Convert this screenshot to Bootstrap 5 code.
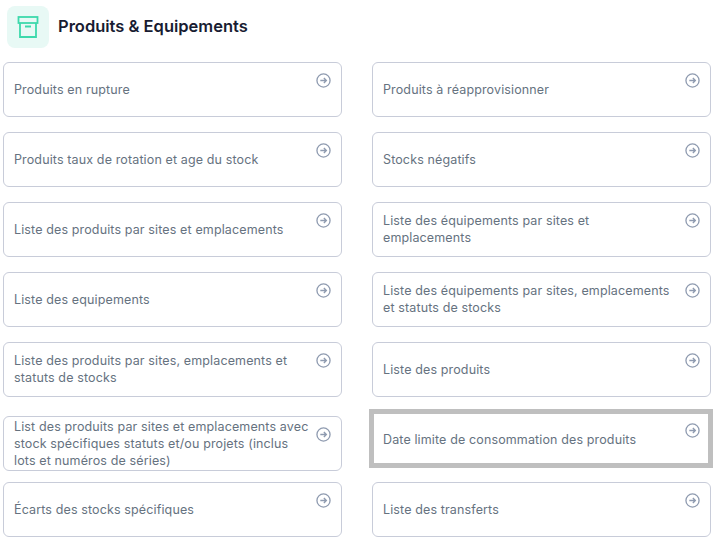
<!DOCTYPE html>
<html lang="fr">
<head>
<meta charset="utf-8">
<title>Produits &amp; Equipements</title>
<link rel="stylesheet" href="https://cdn.jsdelivr.net/npm/bootstrap@5.3.0/dist/css/bootstrap.min.css">
<style>
html,body{overflow:hidden;background:#fff}
body{font-family:"Inter","Open Sans",sans-serif}
.page-head{height:62px;padding:6px 0 0 7px;gap:9px}
.head-tile{width:42px;height:42px;background:#e8f9f5;border-radius:8px}
.head-title{font-size:16.5px;font-weight:600;color:#181c32;margin:0;line-height:20px;padding-top:10px}
.report-grid{grid-template-columns:339px 339px;column-gap:30px;row-gap:15px;padding-left:3px}
.report-card{height:55px;flex-direction:row;border:1px solid #c8ccd9;border-radius:6px;padding:0 10px;color:#66727f;font-size:12.5px;letter-spacing:.13px;line-height:17px;text-decoration:none;background:#fff;gap:6px}
.report-text{flex:1 1 auto;align-self:center;max-width:297px;padding-bottom:.5px}
.report-arrow{flex:none;margin:10px 0 0 auto;width:15px;height:15px}
.report-shift{margin-top:4px;margin-bottom:-4px}
.report-focus{border:5px solid #bfbfbf;border-radius:0;height:59px;margin:-3px -2px -1px -3px;padding:2px 8px 0 9px}
.report-focus .report-arrow{margin-top:7px}
</style>
</head>
<body>
<header class="page-head d-flex align-items-start">
  <div class="head-tile d-flex align-items-center justify-content-center">
    <svg width="22" height="22" viewBox="0 0 22 22" fill="none" stroke="#3dd9ac" stroke-width="1.8"><rect x="1.5" y="1" width="19" height="6"/><path d="M3 7v14h16V7M8 10.5h6"/></svg>
  </div>
  <h1 class="head-title">Produits &amp; Equipements</h1>
</header>
<main class="report-grid d-grid">
  <a href="#" class="report-card card"><span class="report-text">Produits en rupture</span><svg class="report-arrow" viewBox="0 0 16 16" fill="none" stroke="#8f9bb0" stroke-width="1.4"><circle cx="8" cy="8" r="7"/><path stroke-width="1.5" d="M4.6 8h6.4M8.4 5.4 11 8l-2.6 2.6"/></svg></a>
  <a href="#" class="report-card card"><span class="report-text">Produits à réapprovisionner</span><svg class="report-arrow" viewBox="0 0 16 16" fill="none" stroke="#8f9bb0" stroke-width="1.4"><circle cx="8" cy="8" r="7"/><path stroke-width="1.5" d="M4.6 8h6.4M8.4 5.4 11 8l-2.6 2.6"/></svg></a>
  <a href="#" class="report-card card"><span class="report-text">Produits taux de rotation et age du stock</span><svg class="report-arrow" viewBox="0 0 16 16" fill="none" stroke="#8f9bb0" stroke-width="1.4"><circle cx="8" cy="8" r="7"/><path stroke-width="1.5" d="M4.6 8h6.4M8.4 5.4 11 8l-2.6 2.6"/></svg></a>
  <a href="#" class="report-card card"><span class="report-text">Stocks négatifs</span><svg class="report-arrow" viewBox="0 0 16 16" fill="none" stroke="#8f9bb0" stroke-width="1.4"><circle cx="8" cy="8" r="7"/><path stroke-width="1.5" d="M4.6 8h6.4M8.4 5.4 11 8l-2.6 2.6"/></svg></a>
  <a href="#" class="report-card card"><span class="report-text">Liste des produits par sites et emplacements</span><svg class="report-arrow" viewBox="0 0 16 16" fill="none" stroke="#8f9bb0" stroke-width="1.4"><circle cx="8" cy="8" r="7"/><path stroke-width="1.5" d="M4.6 8h6.4M8.4 5.4 11 8l-2.6 2.6"/></svg></a>
  <a href="#" class="report-card card"><span class="report-text">Liste des équipements par sites et emplacements</span><svg class="report-arrow" viewBox="0 0 16 16" fill="none" stroke="#8f9bb0" stroke-width="1.4"><circle cx="8" cy="8" r="7"/><path stroke-width="1.5" d="M4.6 8h6.4M8.4 5.4 11 8l-2.6 2.6"/></svg></a>
  <a href="#" class="report-card card"><span class="report-text">Liste des equipements</span><svg class="report-arrow" viewBox="0 0 16 16" fill="none" stroke="#8f9bb0" stroke-width="1.4"><circle cx="8" cy="8" r="7"/><path stroke-width="1.5" d="M4.6 8h6.4M8.4 5.4 11 8l-2.6 2.6"/></svg></a>
  <a href="#" class="report-card card"><span class="report-text">Liste des équipements par sites, emplacements et statuts de stocks</span><svg class="report-arrow" viewBox="0 0 16 16" fill="none" stroke="#8f9bb0" stroke-width="1.4"><circle cx="8" cy="8" r="7"/><path stroke-width="1.5" d="M4.6 8h6.4M8.4 5.4 11 8l-2.6 2.6"/></svg></a>
  <a href="#" class="report-card card"><span class="report-text">Liste des produits par sites, emplacements et statuts de stocks</span><svg class="report-arrow" viewBox="0 0 16 16" fill="none" stroke="#8f9bb0" stroke-width="1.4"><circle cx="8" cy="8" r="7"/><path stroke-width="1.5" d="M4.6 8h6.4M8.4 5.4 11 8l-2.6 2.6"/></svg></a>
  <a href="#" class="report-card card"><span class="report-text">Liste des produits</span><svg class="report-arrow" viewBox="0 0 16 16" fill="none" stroke="#8f9bb0" stroke-width="1.4"><circle cx="8" cy="8" r="7"/><path stroke-width="1.5" d="M4.6 8h6.4M8.4 5.4 11 8l-2.6 2.6"/></svg></a>
  <a href="#" class="report-card card report-shift"><span class="report-text">List des produits par sites et emplacements avec stock spécifiques statuts et/ou projets (inclus lots et numéros de séries)</span><svg class="report-arrow" viewBox="0 0 16 16" fill="none" stroke="#8f9bb0" stroke-width="1.4"><circle cx="8" cy="8" r="7"/><path stroke-width="1.5" d="M4.6 8h6.4M8.4 5.4 11 8l-2.6 2.6"/></svg></a>
  <a href="#" class="report-card card report-focus"><span class="report-text">Date limite de consommation des produits</span><svg class="report-arrow" viewBox="0 0 16 16" fill="none" stroke="#8f9bb0" stroke-width="1.4"><circle cx="8" cy="8" r="7"/><path stroke-width="1.5" d="M4.6 8h6.4M8.4 5.4 11 8l-2.6 2.6"/></svg></a>
  <a href="#" class="report-card card"><span class="report-text">Écarts des stocks spécifiques</span><svg class="report-arrow" viewBox="0 0 16 16" fill="none" stroke="#8f9bb0" stroke-width="1.4"><circle cx="8" cy="8" r="7"/><path stroke-width="1.5" d="M4.6 8h6.4M8.4 5.4 11 8l-2.6 2.6"/></svg></a>
  <a href="#" class="report-card card"><span class="report-text">Liste des transferts</span><svg class="report-arrow" viewBox="0 0 16 16" fill="none" stroke="#8f9bb0" stroke-width="1.4"><circle cx="8" cy="8" r="7"/><path stroke-width="1.5" d="M4.6 8h6.4M8.4 5.4 11 8l-2.6 2.6"/></svg></a>
</main>
<script src="https://cdn.jsdelivr.net/npm/bootstrap@5.3.0/dist/js/bootstrap.bundle.min.js"></script>
</body>
</html>
